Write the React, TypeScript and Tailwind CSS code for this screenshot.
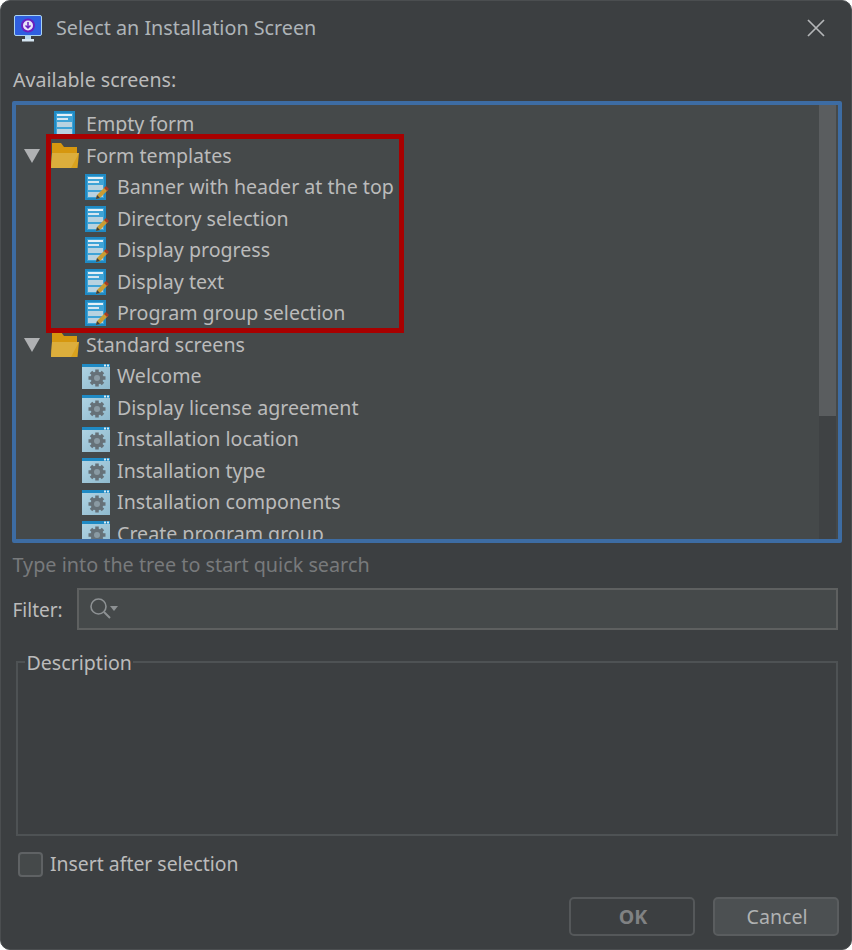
const FONT = "font-['Noto_Sans','Open_Sans',sans-serif]";

// ── Icons ───────────────────────────────────────────────────────────────────

function MonitorIcon() {
  return (
    <svg width="28" height="27" viewBox="0 0 28 27" className="shrink-0">
      <rect x="0.5" y="0.5" width="27" height="20" rx="1.5" fill="#2f5fe0" stroke="#a9d3f0" />
      <circle cx="14" cy="10.5" r="7" fill="#6a1fc0" />
      <circle cx="14" cy="10.5" r="5" fill="#e8e4f8" />
      <path d="M14 7v5.5M11.5 10.5l2.5 2.5 2.5-2.5" stroke="#6a1fc0" strokeWidth="1.5" fill="none" />
      <rect x="11" y="21" width="6" height="3" fill="#b9d9ee" />
      <rect x="8" y="24" width="12" height="2.5" fill="#d5e6f2" />
    </svg>
  );
}

function FormLines() {
  return (
    <>
      <rect x="0" y="0" width="21" height="26" fill="#1f8ac4" />
      <rect x="2" y="2" width="17" height="22" fill="#3fa3d6" />
      <rect x="3" y="3" width="15" height="2" fill="#e4f0f7" />
      <rect x="3" y="7" width="11" height="2" fill="#d6e6f0" />
      <rect x="3" y="11" width="15" height="5" fill="#b8d2e0" />
      <rect x="3" y="18" width="15" height="5" fill="#b8d2e0" />
    </>
  );
}

function FormIcon({ pencil }: { pencil?: boolean }) {
  return (
    <svg width="24" height="26" viewBox="0 0 24 26" className="shrink-0">
      <FormLines />
      {pencil && (
        <>
          <path d="M11 25l1-4 8-8 3 3-8 8z" fill="#c99c34" />
          <path d="M19 14l2-2 3 3-2 2z" fill="#a83a22" />
          <path d="M11 25l1-4 3 3z" fill="#3c3f41" />
        </>
      )}
    </svg>
  );
}

function FolderIcon() {
  return (
    <svg width="28" height="25" viewBox="0 0 28 25" className="shrink-0">
      <path d="M1 0h9l3 4h13v8H1z" fill="#d6970f" />
      <path d="M1 10h27l-1.500 15H0z" fill="#d9a21e" />
      <path d="M0 25L1 10h27l-8 15z" fill="#dcae3c" />
    </svg>
  );
}

function GearIcon() {
  return (
    <svg width="28" height="25" viewBox="0 0 28 25" className="shrink-0">
      <defs>
        <linearGradient id="screen-bg" x1="0" y1="0" x2="1" y2="1">
          <stop offset="0" stopColor="#b0d4e4" />
          <stop offset="1" stopColor="#8fb9cd" />
        </linearGradient>
      </defs>
      <rect width="28" height="25" fill="url(#screen-bg)" />
      <rect width="28" height="3" fill="#1f8ac4" />
      <rect x="22" y="0.500" width="2" height="2" fill="#d8ecf6" />
      <rect x="25" y="0.500" width="2" height="2" fill="#d8ecf6" />
      <g stroke="#667178" strokeWidth="3.500">
        <path d="M15 5.500v17M6.500 14h17M9 8l12 12M21 8L9 20" />
      </g>
      <circle cx="15" cy="14" r="6.500" fill="#667178" />
      <circle cx="15" cy="14" r="3" fill="#8a9aa3" />
    </svg>
  );
}

function Arrow() {
  return (
    <svg width="16" height="14" viewBox="0 0 16 14" className="shrink-0">
      <path d="M0 0h16L8 14z" fill="#afb1b3" />
    </svg>
  );
}

// ── Tree data ───────────────────────────────────────────────────────────────

type RowKind = "empty" | "folder" | "form" | "screen";

const ROWS: { kind: RowKind; label: string }[] = [
  { kind: "empty", label: "Empty form" },
  { kind: "folder", label: "Form templates" },
  { kind: "form", label: "Banner with header at the top" },
  { kind: "form", label: "Directory selection" },
  { kind: "form", label: "Display progress" },
  { kind: "form", label: "Display text" },
  { kind: "form", label: "Program group selection" },
  { kind: "folder", label: "Standard screens" },
  { kind: "screen", label: "Welcome" },
  { kind: "screen", label: "Display license agreement" },
  { kind: "screen", label: "Installation location" },
  { kind: "screen", label: "Installation type" },
  { kind: "screen", label: "Installation components" },
  { kind: "screen", label: "Create program group" },
];

function TreeRow({ kind, label }: { kind: RowKind; label: string }) {
  return (
    <div className="flex h-[31.5px] shrink-0 items-center whitespace-nowrap">
      {kind === "empty" && (
        <div className="ml-[38px] mr-[8px] flex w-[24px]">
          <FormIcon />
        </div>
      )}
      {kind === "folder" && (
        <div className="ml-[8px] flex items-center">
          <Arrow />
          <div className="ml-[11px] mr-[7px] flex">
            <FolderIcon />
          </div>
        </div>
      )}
      {kind === "form" && (
        <div className="ml-[69px] mr-[8px] flex">
          <FormIcon pencil />
        </div>
      )}
      {kind === "screen" && (
        <div className="ml-[66px] mr-[7px] flex">
          <GearIcon />
        </div>
      )}
      <span>{label}</span>
    </div>
  );
}

// ── Dialog ──────────────────────────────────────────────────────────────────

export default function App() {
  return (
    <div className="h-[950px] w-[852px] bg-white">
      <div className={`${FONT} relative flex h-full flex-col rounded-[10px] border border-[#4b4e50] bg-[#3c3f41] text-[19.6px] leading-[28px] text-[#bbbbbb]`}>
        {/* Title bar */}
        <div className="flex h-[54px] shrink-0 items-center pl-[13px] pr-[26px]">
          <MonitorIcon />
          <span className="ml-[14px] flex-1 text-[19.75px] text-[#aeb4b8]">Select an Installation Screen</span>
          <svg width="18" height="18" viewBox="0 0 18 18">
            <path d="M1 1l16 16M17 1L1 17" stroke="#b4b6b8" strokeWidth="1.700" />
          </svg>
        </div>

        <div className="mt-[11px] h-[28px] shrink-0 pl-[12px]">Available screens:</div>

        {/* Tree */}
        <div className="ml-[11px] mt-[7px] flex h-[442px] w-[830px] shrink-0 overflow-hidden rounded-[2px] border-4 border-[#3d6ca3] bg-[#45494a]">
          <div className="flex min-w-0 flex-1 flex-col overflow-hidden pt-[3.250px]">
            {ROWS.map((row) => (
              <TreeRow key={row.label} kind={row.kind} label={row.label} />
            ))}
          </div>
          <div className="flex w-[17px] shrink-0 flex-col bg-[#3f4244]">
            <div className="h-[311px] bg-[#5a5d5f]" />
          </div>
          <div className="w-[2px] shrink-0 bg-[#45494a]" />
        </div>

        {/* Selection highlight drawn over the tree */}
        <div className="absolute left-[45px] top-[133px] h-[199px] w-[358px] border-[5px] border-[#a80000]" />

        <div className="mt-[8px] h-[28px] shrink-0 pl-[11.500px] text-[19.8px] text-[#787a7c]">Type into the tree to start quick search</div>

        {/* Filter */}
        <div className="mt-[9px] flex h-[42px] shrink-0 items-center pl-[11.500px] pr-[13px]">
          <span className="w-[64.500px] pt-[2px] text-[19px]">Filter:</span>
          <div className="flex h-full flex-1 items-center border-2 border-[#5e6060] bg-[#45494a] pl-[10px]">
            <svg width="30" height="24" viewBox="0 0 30 24">
              <circle cx="9.500" cy="9.500" r="7.500" fill="none" stroke="#8d9193" strokeWidth="1.600" />
              <path d="M15 15l6 6" stroke="#8d9193" strokeWidth="2" />
              <path d="M21 9h8l-4 5z" fill="#8d9193" />
            </svg>
          </div>
        </div>

        {/* Description */}
        <fieldset className="ml-[15px] mt-[18px] h-[188px] w-[822px] shrink-0 border-2 border-[#4e5254] pl-[7px]">
          <legend className="translate-y-px px-[1.500px] leading-[28px]">Description</legend>
        </fieldset>

        {/* Checkbox */}
        <div className="ml-[17px] mt-[15px] flex h-[26px] shrink-0 items-center">
          <div className="h-[25px] w-[25px] rounded-[4px] border-2 border-[#5f6264] bg-[#45494a]" />
          <span className="ml-[7px] text-[19.4px]">Insert after selection</span>
        </div>

        {/* Buttons */}
        <div className="mr-[12px] mt-[20px] flex shrink-0 justify-end gap-[18px]">
          <button className="h-[39px] w-[126px] rounded-[5px] border-2 border-[#55585a] bg-[#3c3f41] pl-[2px] font-bold text-[#808283]">OK</button>
          <button className="h-[39px] w-[126px] rounded-[5px] border-2 border-[#5a5d5f] bg-[#4c5052] pl-[2px] text-[#b0b2b3]">Cancel</button>
        </div>
      </div>
    </div>
  );
}
